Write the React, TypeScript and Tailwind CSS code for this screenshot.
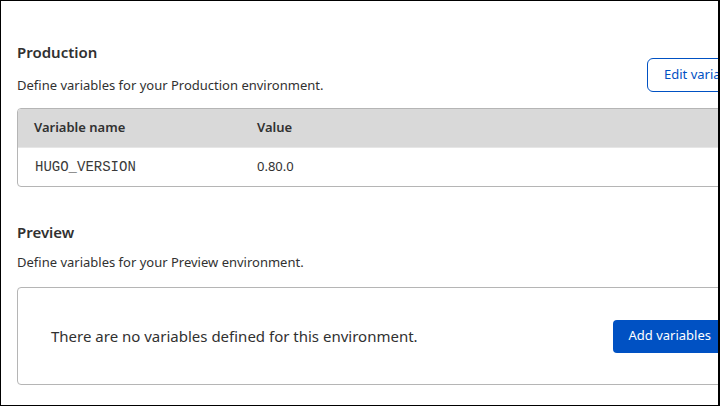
export default function App() {
  return (
    <div className="w-[720px] h-[406px] overflow-hidden bg-white border border-black border-r-2 text-[#313131]" style={{ fontFamily: '"Noto Sans", "Open Sans", sans-serif' }}>
      <div className="w-[780px] pl-4 pt-[40px]">
        <section>
          <div className="flex items-start justify-between">
            <div>
              <h2 className="text-[15px] font-semibold leading-[22px]">Production</h2>
              <p className="mt-[13px] text-[13px] leading-[18px]">Define variables for your Production environment.</p>
            </div>
            <button className="mt-[17px] mr-[14px] h-[34px] w-[120px] rounded-[6px] border border-[#0051c3] px-4 text-left text-[13px] text-[#0051c3]">
              Edit variables
            </button>
          </div>
          <div className="mt-[14px] overflow-hidden rounded-[4px] border border-[#b5b5b5]">
            <div className="flex h-[38px] items-center bg-[#d9d9d9] text-[13px] font-semibold">
              <div className="w-[239px] pl-4">Variable name</div>
              <div>Value</div>
            </div>
            <div className="flex h-[39px] items-center border-t border-[#e6e6e6] text-[13px]">
              <div className="w-[239px] pl-[17px] text-[14px] text-[#3a3a3a]" style={{ fontFamily: '"Liberation Mono", monospace' }}>HUGO_VERSION</div>
              <div>0.80.0</div>
            </div>
          </div>
        </section>
        <section className="mt-[34px]">
          <h2 className="text-[15px] font-semibold leading-[22px]">Preview</h2>
          <p className="mt-[10px] text-[13px] leading-[18px]">Define variables for your Preview environment.</p>
          <div className="mt-[16px] flex h-[98px] items-center justify-between rounded-[4px] border border-[#b5b5b5] pl-[33px] pr-[53px]">
            <p className="text-[15px]">There are no variables defined for this environment.</p>
            <button className="h-[33px] rounded-[4px] bg-[#0051c3] px-4 text-[13px] text-white">Add variables</button>
          </div>
        </section>
      </div>
    </div>
  );
}
